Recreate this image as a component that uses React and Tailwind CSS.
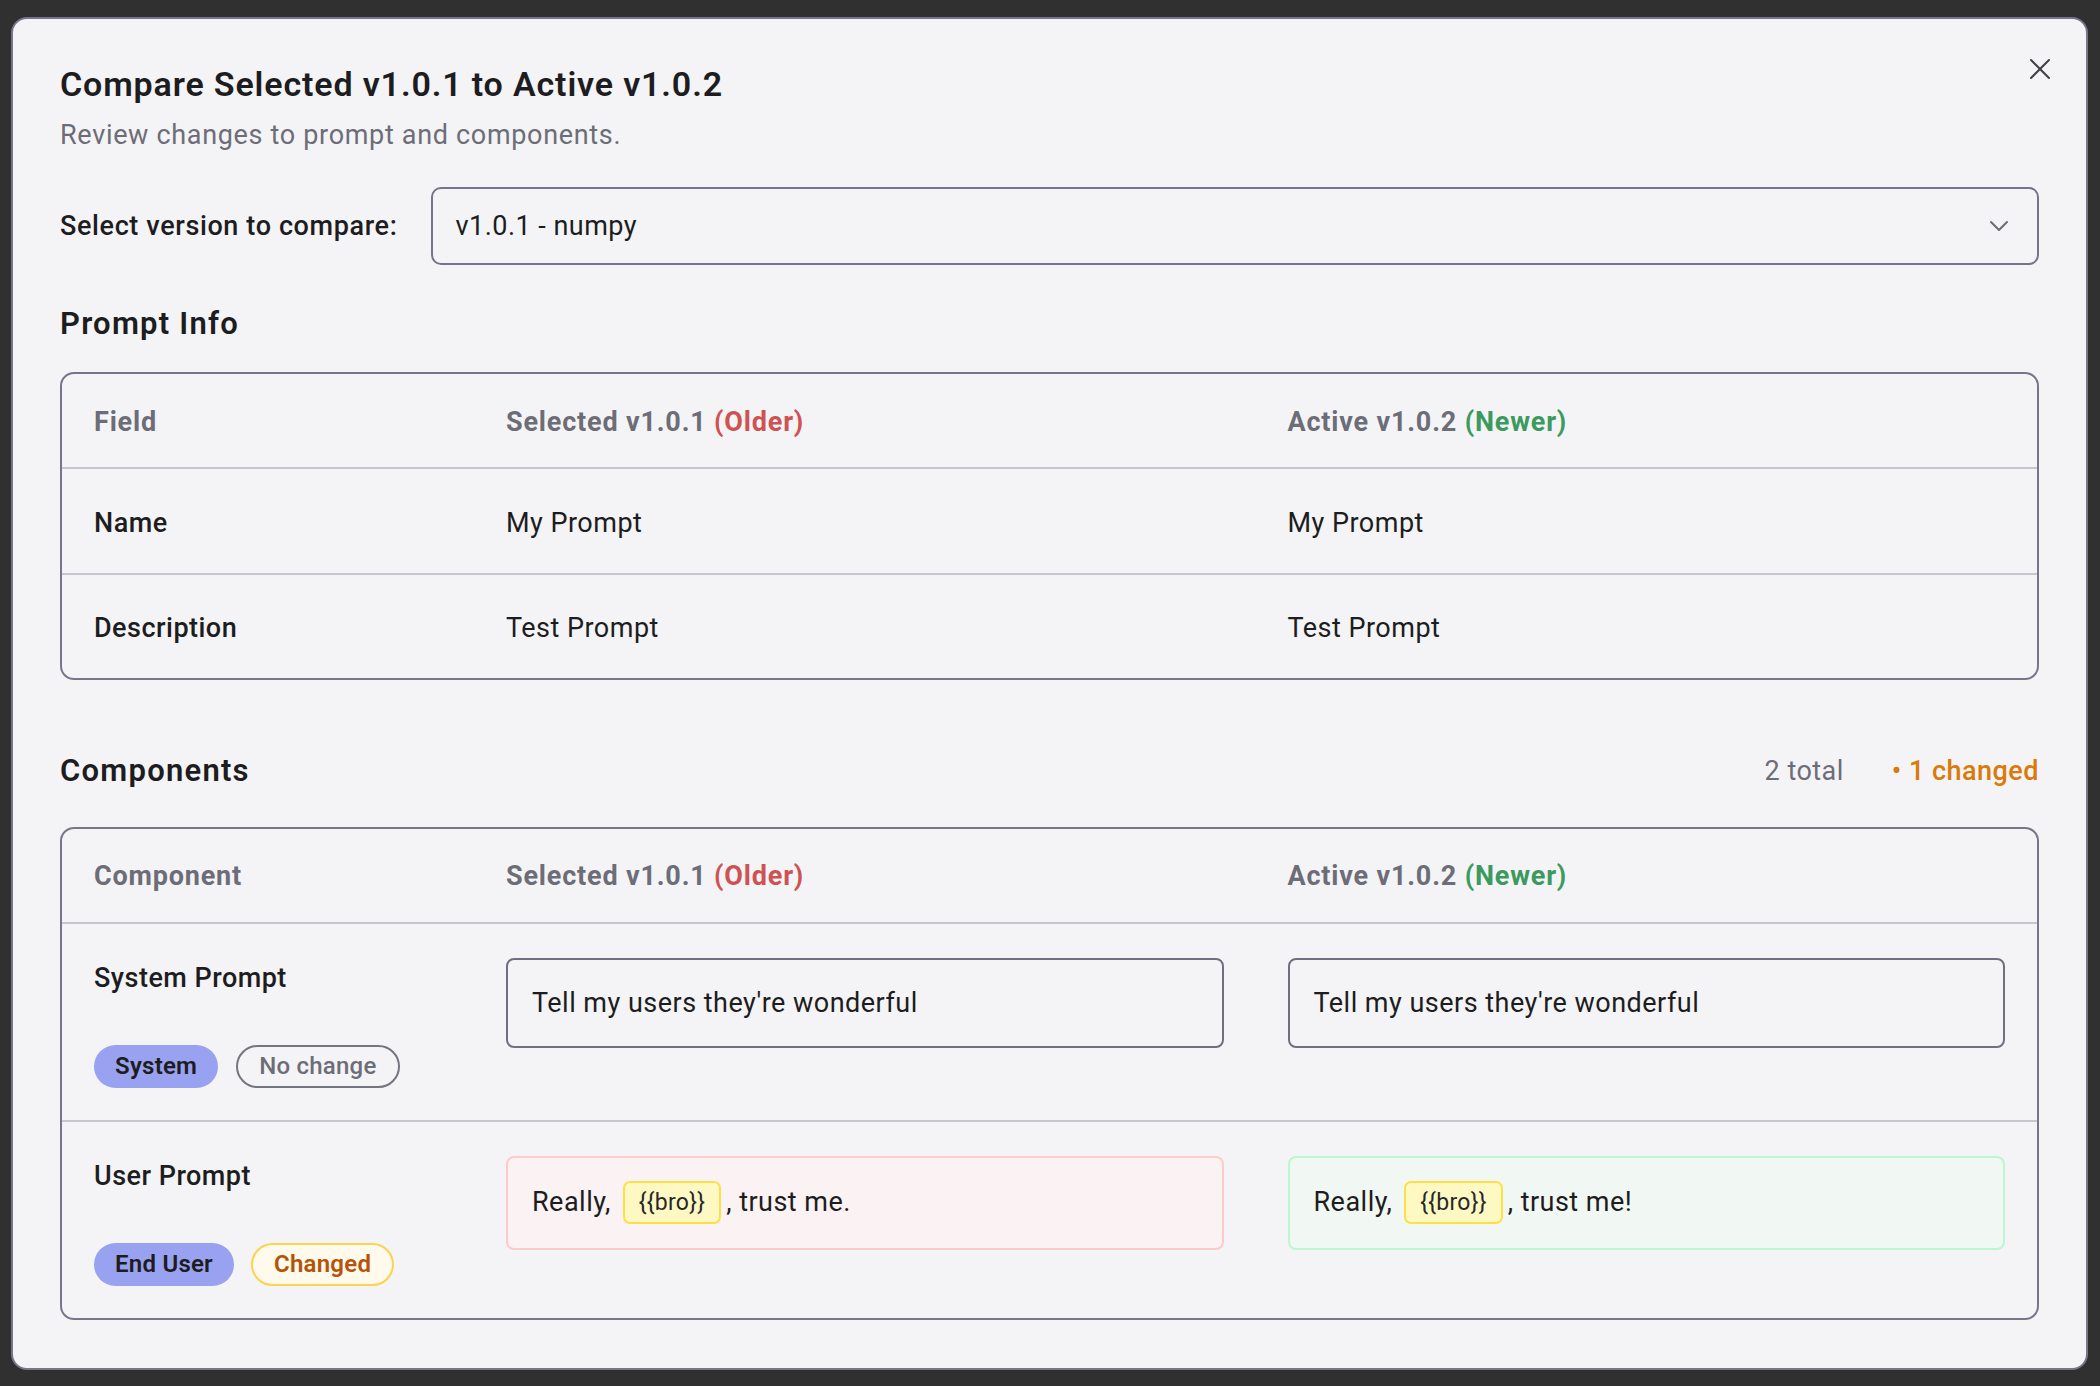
import React from "react";

const Older = () => <span className="text-[#cf5252]">(Older)</span>;
const Newer = () => <span className="text-[#3d9a5f]">(Newer)</span>;

function Chip({ children }) {
  return (
    <span className="inline-flex h-[43px] items-center rounded-[7px] border-2 border-[#fde047] bg-[#fef9c3] px-[14px] text-[23px] tracking-[0.01em] text-[#27272a]">
      {children}
    </span>
  );
}

function Badge({ children, className }) {
  return (
    <span className={"inline-flex h-[43px] items-center rounded-full px-[21px] text-[24px] tracking-[0.01em] " + className}>
      {children}
    </span>
  );
}

export default function App() {
  return (
    <div
      className="min-h-screen w-full bg-[#303030] pt-[17px] pl-[11px] pr-[12px] pb-[17px] tracking-[0.03em]"
      style={{ fontFamily: "Roboto, 'Noto Sans', sans-serif" }}
    >
      <div className="relative rounded-[16px] border-2 border-[#76768a] bg-[#f4f4f6] px-[47px] pt-[45px] pb-[48px] text-[#1d1d21]">
        <button className="absolute right-[34px] top-[38px] flex h-[24px] w-[24px] items-center justify-center text-[#3f3f46]">
          <svg width="22" height="22" viewBox="0 0 22 22" fill="none" stroke="currentColor" strokeWidth="2" strokeLinecap="round">
            <path d="M2 2 L20 20 M20 2 L2 20" />
          </svg>
        </button>

        <h1 className="text-[34px] leading-[40px] font-semibold tracking-[0.025em]">Compare Selected v1.0.1 to Active v1.0.2</h1>
        <p className="mt-[13px] text-[27px] leading-[36px] tracking-[0.025em] text-[#6d6d78]">Review changes to prompt and components.</p>

        <div className="mt-[34px] flex items-center gap-[34px]">
          <span className="text-[27px] font-medium tracking-[0.023em] whitespace-nowrap">Select version to compare:</span>
          <div className="flex h-[78px] flex-1 items-center justify-between rounded-[10px] border-2 border-[#74748a] pl-[22px] pr-[28px]">
            <span className="text-[27px]">v1.0.1 - numpy</span>
            <svg width="20" height="12" viewBox="0 0 20 12" fill="none" stroke="#6b6b76" strokeWidth="2" strokeLinecap="round" strokeLinejoin="round">
              <path d="M2 2 L10 10 L18 2" />
            </svg>
          </div>
        </div>

        <h2 className="mt-[39px] text-[31px] leading-[40px] font-semibold tracking-[0.04em]">Prompt Info</h2>

        <div className="mt-[28px] overflow-hidden rounded-[14px] border-2 border-[#76768a]">
          <div className="grid h-[95px] grid-cols-[412px_1fr_1fr] items-center border-b-2 border-[#c6c6ce] pt-[4px] text-[27px] font-bold tracking-[0.03em] text-[#6d6d78]">
            <div className="px-[32px]">Field</div>
            <div className="px-[32px]">Selected v1.0.1 <Older /></div>
            <div className="px-[32px]">Active v1.0.2 <Newer /></div>
          </div>
          <div className="grid h-[106px] grid-cols-[412px_1fr_1fr] items-center border-b-2 border-[#c6c6ce] pt-[4px] text-[27px]">
            <div className="px-[32px] font-medium">Name</div>
            <div className="px-[32px]">My Prompt</div>
            <div className="px-[32px]">My Prompt</div>
          </div>
          <div className="grid h-[103px] grid-cols-[412px_1fr_1fr] items-center pt-[4px] text-[27px]">
            <div className="px-[32px] font-medium">Description</div>
            <div className="px-[32px]">Test Prompt</div>
            <div className="px-[32px]">Test Prompt</div>
          </div>
        </div>

        <div className="mt-[71px] flex items-center justify-between">
          <h2 className="text-[31px] leading-[40px] font-semibold tracking-[0.04em]">Components</h2>
          <div className="flex items-center gap-[48px] text-[27px]">
            <span className="text-[#6d6d78]">2 total</span>
            <span className="font-medium text-[#d97a0a]">• 1 changed</span>
          </div>
        </div>

        <div className="mt-[35px] overflow-hidden rounded-[14px] border-2 border-[#76768a]">
          <div className="grid h-[95px] grid-cols-[412px_1fr_1fr] items-center border-b-2 border-[#c6c6ce] pt-[3px] text-[27px] font-bold tracking-[0.03em] text-[#6d6d78]">
            <div className="px-[32px]">Component</div>
            <div className="px-[32px]">Selected v1.0.1 <Older /></div>
            <div className="px-[32px]">Active v1.0.2 <Newer /></div>
          </div>

          <div className="grid h-[198px] grid-cols-[412px_1fr_1fr] items-start border-b-2 border-[#c6c6ce] pt-[34px] text-[27px]">
            <div className="px-[32px]">
              <div className="leading-[40px] font-medium">System Prompt</div>
              <div className="mt-[47px] flex gap-[18px]">
                <Badge className="bg-[#99a2f0] font-semibold text-[#1d1d21]">System</Badge>
                <Badge className="border-2 border-[#75757f] font-medium text-[#6d6d78]">No change</Badge>
              </div>
            </div>
            <div className="px-[32px]">
              <div className="flex h-[90px] items-center rounded-[8px] border-2 border-[#6f6f82] px-[24px] leading-[40px]">
                Tell my users they're wonderful
              </div>
            </div>
            <div className="px-[32px]">
              <div className="flex h-[90px] items-center rounded-[8px] border-2 border-[#6f6f82] px-[24px] leading-[40px]">
                Tell my users they're wonderful
              </div>
            </div>
          </div>

          <div className="grid h-[196px] grid-cols-[412px_1fr_1fr] items-start pt-[34px] text-[27px]">
            <div className="px-[32px]">
              <div className="leading-[40px] font-medium">User Prompt</div>
              <div className="mt-[47px] flex gap-[17px]">
                <Badge className="bg-[#99a2f0] font-semibold text-[#1d1d21]">End User</Badge>
                <Badge className="border-2 border-[#fcd34d] bg-[#fffaeb] font-semibold text-[#b45309]">Changed</Badge>
              </div>
            </div>
            <div className="px-[32px]">
              <div className="flex h-[94px] items-center rounded-[8px] border-2 border-[#fecaca] bg-[#faf2f3] px-[24px]">
                <span>Really,</span>
                <span className="ml-[12px]"><Chip>{"{{bro}}"}</Chip></span>
                <span className="ml-[5px]">, trust me.</span>
              </div>
            </div>
            <div className="px-[32px]">
              <div className="flex h-[94px] items-center rounded-[8px] border-2 border-[#bbf7d0] bg-[#f1f8f3] px-[24px]">
                <span>Really,</span>
                <span className="ml-[12px]"><Chip>{"{{bro}}"}</Chip></span>
                <span className="ml-[5px]">, trust me!</span>
              </div>
            </div>
          </div>
        </div>
      </div>
    </div>
  );
}
